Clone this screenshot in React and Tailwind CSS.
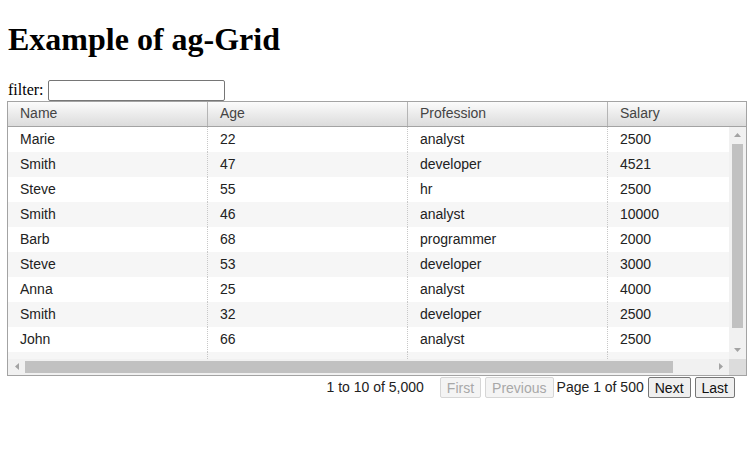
import React from 'react'

const columns = ['Name', 'Age', 'Profession', 'Salary']

const rows = [
  ['Marie', '22', 'analyst', '2500'],
  ['Smith', '47', 'developer', '4521'],
  ['Steve', '55', 'hr', '2500'],
  ['Smith', '46', 'analyst', '10000'],
  ['Barb', '68', 'programmer', '2000'],
  ['Steve', '53', 'developer', '3000'],
  ['Anna', '25', 'analyst', '4000'],
  ['Smith', '32', 'developer', '2500'],
  ['John', '66', 'analyst', '2500'],
  ['', '', '', ''],
]

function Arrow({ dir }) {
  const points = {
    up: '0,4 3.5,0 7,4',
    down: '0,0 7,0 3.5,4',
    left: '4,0 4,7 0,3.5',
    right: '0,0 0,7 4,3.5',
  }[dir]
  const vertical = dir === 'up' || dir === 'down'
  return (
    <svg width={vertical ? 7 : 4} height={vertical ? 4 : 7} viewBox={vertical ? '0 0 7 4' : '0 0 4 7'}>
      <polygon points={points} fill="#a3a3a3" />
    </svg>
  )
}

function PageButton({ children, disabled }) {
  return (
    <button
      disabled={disabled}
      className={
        'h-[21px] px-[6px] rounded-[2px] border text-[14px] leading-none ' +
        (disabled
          ? 'border-[#d6d6d6] bg-[#f4f4f4] text-[#a8a8a8]'
          : 'border-[#767676] bg-[#efefef] text-[#111]')
      }
    >
      {children}
    </button>
  )
}

export default function App() {
  return (
    <div className="px-2 pb-2 font-['Liberation_Serif',serif] text-black bg-white min-h-screen">
      <h1 className="text-[32px] font-bold leading-[37px] my-[21.44px]">Example of ag-Grid</h1>

      <div className="flex items-center gap-[4px] h-[21px] text-[16px]">
        <span>filter:</span>
        <input type="text" className="w-[177px] h-[21px] border border-[#767676] rounded-[2px] bg-white outline-none px-1" />
      </div>

      {/* grid */}
      <div className="-ml-px w-[740px] h-[275px] border border-[#a3a3a3] flex flex-col font-['Liberation_Sans',Arial,sans-serif] text-[14px]">
        <div className="h-[25px] shrink-0 flex overflow-hidden border-b border-[#a3a3a3] bg-linear-to-b from-[#fbfbfb] to-[#dcdcdc] text-[#444]">
          {columns.map((c) => (
            <div key={c} className="w-[200px] shrink-0 border-r border-[#b5b5b5] pl-[12px] flex items-center">
              {c}
            </div>
          ))}
        </div>

        <div className="flex flex-1 min-h-0">
          <div className="flex-1 overflow-hidden">
            {rows.map((r, i) => (
              <div key={i} className={'flex h-[25px] text-[#222] ' + (i % 2 ? 'bg-[#f6f6f6]' : 'bg-white')}>
                {r.map((v, j) => (
                  <div key={j} className="w-[200px] shrink-0 border-r border-dotted border-[#c8c8c8] pl-[12px] flex items-center">
                    {v}
                  </div>
                ))}
              </div>
            ))}
          </div>
          <div className="w-[17px] shrink-0 bg-[#f1f1f1] flex flex-col items-center">
            <div className="h-[17px] shrink-0 flex items-center justify-center">
              <Arrow dir="up" />
            </div>
            <div className="w-[11px] h-[184px] bg-[#c1c1c1]" />
            <div className="flex-1" />
            <div className="h-[17px] shrink-0 flex items-center justify-center">
              <Arrow dir="down" />
            </div>
          </div>
        </div>

        <div className="h-[16px] shrink-0 flex">
          <div className="flex-1 bg-[#f1f1f1] flex items-center">
            <div className="w-[17px] shrink-0 flex items-center justify-center">
              <Arrow dir="left" />
            </div>
            <div className="w-[648px] h-[12px] bg-[#c1c1c1]" />
            <div className="flex-1" />
            <div className="w-[17px] shrink-0 flex items-center justify-center">
              <Arrow dir="right" />
            </div>
          </div>
          <div className="w-[17px] shrink-0 bg-[#dcdcdc]" />
        </div>
      </div>

      {/* paging panel */}
      <div className="flex items-center justify-end h-[23px] pt-[1px] pr-[12px] font-['Liberation_Sans',Arial,sans-serif] text-[14px] text-[#222]">
        <span className="mr-[16px]">1 to 10 of 5,000</span>
        <PageButton disabled>First</PageButton>
        <span className="w-[4px]" />
        <PageButton disabled>Previous</PageButton>
        <span className="ml-[3px] mr-[4px]">Page 1 of 500</span>
        <PageButton>Next</PageButton>
        <span className="w-[4px]" />
        <PageButton>Last</PageButton>
      </div>
    </div>
  )
}
